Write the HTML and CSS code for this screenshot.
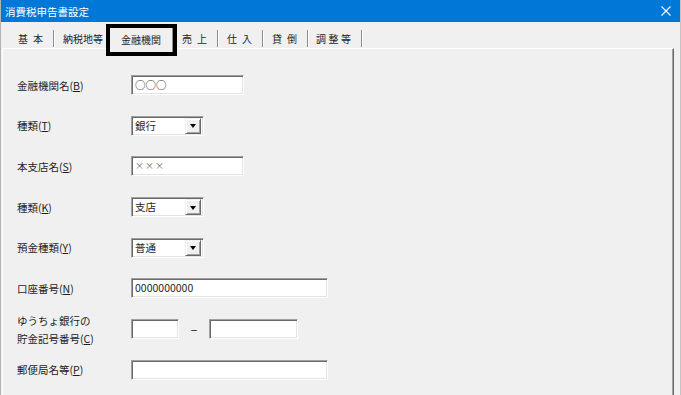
FILE: index.html
```html
<!DOCTYPE html>
<html lang="ja">
<head>
  <meta charset="UTF-8">
  <title>消費税申告書設定</title>
  <link rel="stylesheet" href="styles.css">
</head>
<body>

  <div class="window">
    <!-- タイトルバー -->
    <div class="titlebar">
      <span>消費税申告書設定</span>
      <svg class="close" width="10" height="10" viewBox="0 0 10 10">
        <path d="M0.5 0.5 L9.5 9.5 M9.5 0.5 L0.5 9.5" stroke="#fff" stroke-width="1.1" fill="none"/>
      </svg>
    </div>

    <div class="content">
      <!-- タブ -->
      <div class="tabs">
        <div class="tab spaced">基本</div>
        <div class="tab">納税地等</div>
        <div class="tab active">金融機関</div>
        <div class="tab spaced">売上</div>
        <div class="tab spaced">仕入</div>
        <div class="tab spaced">貸倒</div>
        <div class="tab loose">調整等</div>
      </div>

      <!-- 金融機関パネル -->
      <div class="panel">
        <div class="form">
          <label>金融機関名(<u>B</u>)</label>
          <div class="field w-name">○○○</div>

          <label>種類(<u>T</u>)</label>
          <div class="field combo"><span>銀行</span><span class="drop"></span></div>

          <label>本支店名(<u>S</u>)</label>
          <div class="field w-name small">×××</div>

          <label>種類(<u>K</u>)</label>
          <div class="field combo"><span>支店</span><span class="drop"></span></div>

          <label>預金種類(<u>Y</u>)</label>
          <div class="field combo"><span>普通</span><span class="drop"></span></div>

          <label>口座番号(<u>N</u>)</label>
          <div class="field w-long">0000000000</div>

          <label class="two-line">ゆうちょ銀行の<br>貯金記号番号(<u>C</u>)</label>
          <div class="pair">
            <div class="field w-code"></div>
            <span class="dash">–</span>
            <div class="field w-num"></div>
          </div>

          <label>郵便局名等(<u>P</u>)</label>
          <div class="field w-long"></div>
        </div>
      </div>
    </div>
  </div>

</body>
</html>
```

FILE: styles.css
```css
/* ダイアログ全体 */
body {
  margin: 0;
  background: #f0f0f0;
  font-family: "Noto Sans CJK JP", "Noto Sans", sans-serif;
  font-size: 10.5px;
  color: #1e1e1e;
}

.window {
  width: 681px;
  height: 395px;
  box-sizing: border-box;
  border-left: 1px solid #b4b4b4;
  border-right: 1px solid #c4c4c4;
  display: flex;
  flex-direction: column;
  overflow: hidden;
}

.titlebar {
  height: 22px;
  flex: none;
  background: #0078d7;
  color: #fff;
  display: flex;
  align-items: center;
  justify-content: space-between;
  padding: 0 9px 0 4px;
}

.content {
  flex: 1;
  display: flex;
  flex-direction: column;
  padding: 0 6px 0 1px;
}

/* タブ */
.tabs {
  height: 26px;
  flex: none;
  display: flex;
  align-items: flex-end;
  padding-left: 8px;
  font-size: 10px;
}

.tab {
  height: 17px;
  line-height: 18px;
  padding: 0 6px 0 8px;
  border-right: 1px solid #8d8d8d;
  box-shadow: 1px 0 0 #fff;
  margin-bottom: 1px;
  margin-right: 1px;
}

.tab.spaced {
  letter-spacing: 5px;
  padding: 0 5px 0 8px;
}

.tab.loose {
  letter-spacing: 2.5px;
  padding: 0 7px;
}

.tab.active {
  position: relative;
  z-index: 1;
  height: 24px;
  line-height: 24px;
  margin: 0 1px -4px -1px;
  padding: 0 11px;
  background: #f0f0f0;
  outline: 4px solid #000;
  border-right: 1px solid #8d8d8d;
}

/* パネル */
.panel {
  flex: 1;
  border-top: 1px solid #fff;
  border-left: 1px solid #fff;
  border-right: 1px solid #696969;
  box-shadow: inset -1px 0 0 #a0a0a0;
}

.form {
  display: grid;
  grid-template-columns: 114px auto;
  grid-auto-rows: 20px;
  row-gap: 20.7px;
  align-items: center;
  justify-items: start;
  padding: 26px 0 0 14px;
}

.form label u {
  text-decoration-thickness: 1px;
  text-underline-offset: 1px;
}

.two-line {
  line-height: 18px;
  margin: -6px 0 -8px;
}

/* 入力欄 */
.field {
  height: 20px;
  box-sizing: border-box;
  background: #fff;
  border-top: 1px solid #a0a0a0;
  border-left: 1px solid #a0a0a0;
  border-bottom: 1px solid #fff;
  border-right: 1px solid #fff;
  box-shadow: inset 1px 1px 0 #696969, inset -1px -1px 0 #e3e3e3;
  padding: 0 0 0 3px;
  line-height: 18px;
  white-space: nowrap;
}

.field.small {
  font-size: 9px;
  color: #666;
  letter-spacing: 1px;
}

.w-name { width: 113px; }
.w-long { width: 197px; }
.w-code { width: 48px; }
.w-num { width: 89px; }

.combo {
  width: 73px;
  display: flex;
  justify-content: space-between;
  padding: 0 2px 0 3px;
}

.drop {
  width: 16px;
  height: 16px;
  margin-top: 1px;
  box-sizing: border-box;
  background: #f0f0f0;
  border: 1px solid;
  border-color: #f0f0f0 #696969 #696969 #f0f0f0;
  box-shadow: inset 1px 1px 0 #fff, inset -1px -1px 0 #a0a0a0;
  display: flex;
  align-items: center;
  justify-content: center;
}

.drop::after {
  content: "";
  border-left: 3.5px solid transparent;
  border-right: 3.5px solid transparent;
  border-top: 4px solid #000;
  margin-top: 1px;
}

.pair {
  display: flex;
  align-items: center;
}

.dash {
  width: 30px;
  text-align: center;
  font-size: 13px;
  line-height: 18px;
}
```
